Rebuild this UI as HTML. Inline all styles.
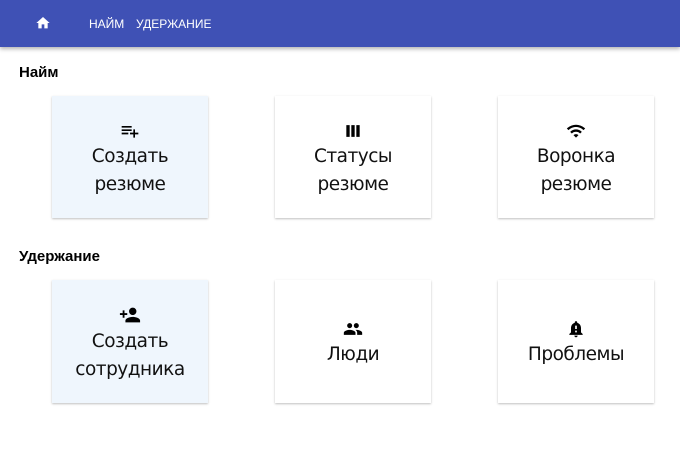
<!DOCTYPE html>
<html><head><meta charset="utf-8"><style>
*{margin:0;padding:0;box-sizing:border-box}
body{width:680px;height:450px;background:#fff;font-family:"Liberation Sans","DejaVu Sans",sans-serif;position:relative;overflow:hidden}
.bar{position:absolute;left:0;top:0;width:680px;height:47px;background:#3f51b5;box-shadow:0 2px 4px rgba(0,0,0,.3)}
.nav{position:absolute;top:17px;color:#fff;font-size:12px}
h2{position:absolute;left:19px;font-size:15px;font-weight:bold;color:#000}
.card{position:absolute;width:156px;background:#fff;box-shadow:0 1px 2px rgba(0,0,0,.25);display:flex;flex-direction:column;align-items:center;justify-content:center;text-align:center;padding-top:5px}
.card.a{background:#eff6fd}
.t{font-family:"DejaVu Sans",sans-serif;font-size:18.5px;line-height:28px;color:#111;letter-spacing:-0.5px}
svg{display:block;margin-bottom:2px}
</style></head><body>
<div class="bar">
<svg style="position:absolute;left:35px;top:15px" width="16" height="16" viewBox="0 0 24 24"><path fill="#fff" d="M10 20v-6h4v6h5v-8h3L12 3 2 12h3v8z"/></svg>
<span class="nav" style="left:89px">НАЙМ</span>
<span class="nav" style="left:136px">УДЕРЖАНИЕ</span>
</div>
<h2 style="top:64px">Найм</h2>
<div class="card a" style="left:52px;top:96px;height:122px"><svg width="20" height="20" viewBox="0 0 24 24"><path d="M14 10H2v2h12v-2zm0-4H2v2h12V6zm4 8v-4h-2v4h-4v2h4v4h2v-4h4v-2h-4zM2 16h8v-2H2v2z"/></svg><div class="t">Создать<br>резюме</div></div>
<div class="card" style="left:275px;top:96px;height:122px"><svg width="20" height="20" viewBox="0 0 24 24"><path d="M4 5h4v14H4zm6 0h4v14h-4zm6 0h4v14h-4z"/></svg><div class="t">Статусы<br>резюме</div></div>
<div class="card" style="left:498px;top:96px;height:122px"><svg width="20" height="20" viewBox="0 0 24 24"><path d="M1 9l2 2c4.97-4.97 13.03-4.97 18 0l2-2C16.93 2.93 7.08 2.93 1 9zm8 8l3 3 3-3c-1.650-1.66-4.34-1.66-6 0zm-4-4l2 2c2.76-2.76 7.24-2.76 10 0l2-2C15.14 9.14 8.87 9.14 5 13z"/></svg><div class="t">Воронка<br>резюме</div></div>
<h2 style="top:248px">Удержание</h2>
<div class="card a" style="left:52px;top:280px;height:123px"><svg width="22" height="22" viewBox="0 0 24 24"><path d="M15 12c2.21 0 4-1.79 4-4s-1.79-4-4-4-4 1.79-4 4 1.79 4 4 4zm-9-2V7H4v3H1v2h3v3h2v-3h3v-2H6zm9 4c-2.67 0-8 1.34-8 4v2h16v-2c0-2.66-5.33-4-8-4z"/></svg><div class="t">Создать<br>сотрудника</div></div>
<div class="card" style="left:275px;top:280px;height:123px"><svg width="20" height="20" viewBox="0 0 24 24"><path d="M16 11c1.66 0 2.99-1.34 2.99-3S17.660 5 16 5c-1.66 0-3 1.34-3 3s1.34 3 3 3zm-8 0c1.66 0 2.99-1.34 2.99-3S9.66 5 8 5C6.34 5 5 6.34 5 8s1.34 3 3 3zm0 2c-2.33 0-7 1.17-7 3.5V19h14v-2.5c0-2.33-4.67-3.5-7-3.5zm8 0c-.29 0-.62.02-.97.05 1.16.84 1.97 1.97 1.970 3.45V19h6v-2.5c0-2.33-4.67-3.5-7-3.5z"/></svg><div class="t">Люди</div></div>
<div class="card" style="left:498px;top:280px;height:123px"><svg width="20" height="20" viewBox="0 0 24 24"><path d="M12 22c1.1 0 2-.9 2-2h-4c0 1.1.89 2 2 2zm6-6v-5c0-3.07-1.64-5.64-4.5-6.32V4c0-.83-.67-1.5-1.5-1.5s-1.5.67-1.5 1.5v.68C7.63 5.36 6 7.92 6 11v5l-2 2v1h16v-1l-2-2zm-5 0h-2v-2h2v2zm0-4h-2V8h2v4z"/></svg><div class="t">Проблемы</div></div>
</body></html>
